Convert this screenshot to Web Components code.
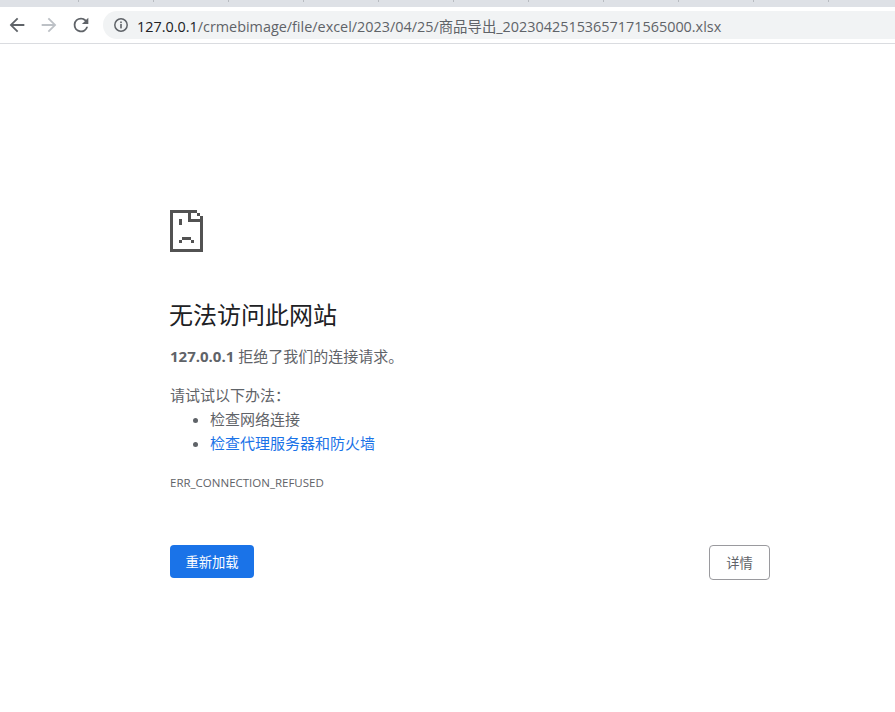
<!DOCTYPE html>
<html lang="zh-CN">
<head>
<meta charset="utf-8">
<title>127.0.0.1</title>
<style>
  html, body { margin: 0; height: 100%; background: #fff; }
  body { font-family: "Liberation Sans", "Noto Sans CJK SC", sans-serif; overflow: hidden; }
  a { color: #1a73e8; text-decoration: none; }
</style>
</head>
<body>
<browser-toolbar url-host="127.0.0.1" url-path="/crmebimage/file/excel/2023/04/25/商品导出_20230425153657171565000.xlsx"></browser-toolbar>
<error-page>
  <span slot="title">无法访问此网站</span>
  <span slot="summary"><b>127.0.0.1</b> 拒绝了我们的连接请求。</span>
  <span slot="tries">请试试以下办法：</span>
  <li slot="items">检查网络连接</li>
  <li slot="items"><a href="#">检查代理服务器和防火墙</a></li>
  <span slot="code">ERR_CONNECTION_REFUSED</span>
</error-page>

<script>
const CJK = '"Open Sans", "Noto Sans CJK SC", sans-serif';

class BrowserToolbar extends HTMLElement {
  connectedCallback() {
    this.attachShadow({ mode: 'open' });
    const host = this.getAttribute('url-host');
    const path = this.getAttribute('url-path');
    this.shadowRoot.innerHTML = `
      <style>
        :host { display: block; font-family: ${CJK}; }
        .tabs { height: 7px; background: #dee1e6; display: flex; padding-left: 78px; }
        .tabs i { width: 75px; flex: none; box-sizing: border-box; border-left: 1px solid #b9bcc1; height: 2px; }
        .bar { height: 36px; border-bottom: 1px solid #dadce0; display: flex; align-items: center; padding: 0 0 0 6px; background: #fff; }
        .btn { width: 22px; height: 22px; flex: none; margin-right: 10px; }
        .btn:nth-child(3) { margin-right: 11px; }
        svg { display: block; }
        .omni { flex: 1; height: 28px; background: #f1f3f4; border-radius: 14px 0 0 14px; display: flex; align-items: center; padding-left: 10px; white-space: nowrap; font-size: 14.4px; color: #5f6368; overflow: hidden; }
        .omni svg { margin-right: 8px; flex: none; }
        .host { color: #202124; }
      </style>
      <div class="tabs">${'<i></i>'.repeat(11)}</div>
      <div class="bar">
        <svg class="btn" viewBox="0 0 24 24" fill="#5f6368"><path d="M20 11H7.83l5.59-5.59L12 4l-8 8 8 8 1.41-1.41L7.83 13H20v-2z"/></svg>
        <svg class="btn" viewBox="0 0 24 24" fill="#bdc1c6"><path d="M12 4l-1.41 1.41L16.17 11H4v2h12.17l-5.58 5.59L12 20l8-8z"/></svg>
        <svg class="btn" viewBox="0 0 24 24" fill="#5f6368"><path d="M17.65 6.35A7.96 7.96 0 0 0 12 4a8 8 0 1 0 7.73 10h-2.08A6 6 0 1 1 12 6c1.66 0 3.14.69 4.22 1.78L13 11h7V4l-2.35 2.35z"/></svg>
        <div class="omni">
          <svg width="16" height="16" viewBox="0 0 16 16" fill="none"><circle cx="8" cy="8" r="6.2" stroke="#5f6368" stroke-width="1.5"/><rect x="7.2" y="7" width="1.6" height="4.4" fill="#5f6368"/><rect x="7.2" y="4.5" width="1.6" height="1.6" fill="#5f6368"/></svg>
          <span><span class="host">${host}</span>${path}</span>
        </div>
      </div>`;
  }
}
customElements.define('browser-toolbar', BrowserToolbar);

class SadFile extends HTMLElement {
  connectedCallback() {
    this.attachShadow({ mode: 'open' });
    this.shadowRoot.innerHTML = `
      <style>:host { display: block; width: 33px; height: 42px; } svg { display: block; }</style>
      <svg width="33" height="42" viewBox="0 0 33 42" fill="#525252" shape-rendering="crispEdges">
        <rect x="0" y="0" width="27" height="3"/>
        <rect x="0" y="0" width="3" height="42"/>
        <rect x="0" y="39" width="33" height="3"/>
        <rect x="30" y="6" width="3" height="36"/>
        <rect x="27" y="3" width="3" height="3"/>
        <rect x="18" y="0" width="3" height="12"/>
        <rect x="18" y="9" width="15" height="3"/>
        <rect x="9" y="9" width="3" height="6"/>
        <rect x="9" y="30" width="3" height="3"/>
        <rect x="12" y="27" width="9" height="3"/>
        <rect x="21" y="30" width="3" height="3"/>
      </svg>`;
  }
}
customElements.define('sad-file', SadFile);

class ActionButton extends HTMLElement {
  connectedCallback() {
    this.attachShadow({ mode: 'open' });
    this.shadowRoot.innerHTML = `
      <style>
        :host { display: inline-flex; align-items: center; justify-content: center; box-sizing: border-box; border-radius: 4px; font-size: 13.3px; font-family: ${CJK}; }
        :host([kind="primary"]) { width: 84px; height: 33px; background: #1a73e8; color: #fff; }
        :host([kind="outline"]) { width: 61px; height: 35px; background: #fff; color: #5f6368; border: 1px solid #9a9a9e; }
      </style>
      <slot></slot>`;
  }
}
customElements.define('action-button', ActionButton);

class ErrorPage extends HTMLElement {
  connectedCallback() {
    this.attachShadow({ mode: 'open' });
    this.shadowRoot.innerHTML = `
      <style>
        :host { display: block; padding: 166px 125px 0 170px; color: #5f6368; font-family: ${CJK}; font-size: 15px; }
        h1 { margin: 46px 0 0 -1px; font-size: 24px; font-weight: 400; line-height: 34px; color: #202124; }
        .summary { margin-top: 13px; line-height: 22px; height: 22px; }
        .tries { margin-top: 17px; line-height: 22px; }
        ul { margin: 1px 0 0; padding: 0 0 0 40px; line-height: 24px; }
        .code { margin-top: 20px; font-size: 11.5px; line-height: 16px; }
        .actions { margin-top: 54px; display: flex; justify-content: space-between; align-items: flex-start; }
      </style>
      <sad-file></sad-file>
      <h1><slot name="title"></slot></h1>
      <div class="summary"><slot name="summary"></slot></div>
      <div class="tries"><slot name="tries"></slot></div>
      <ul><slot name="items"></slot></ul>
      <div class="code"><slot name="code"></slot></div>
      <div class="actions">
        <action-button kind="primary">重新加载</action-button>
        <action-button kind="outline">详情</action-button>
      </div>`;
  }
}
customElements.define('error-page', ErrorPage);
</script>
</body>
</html>
